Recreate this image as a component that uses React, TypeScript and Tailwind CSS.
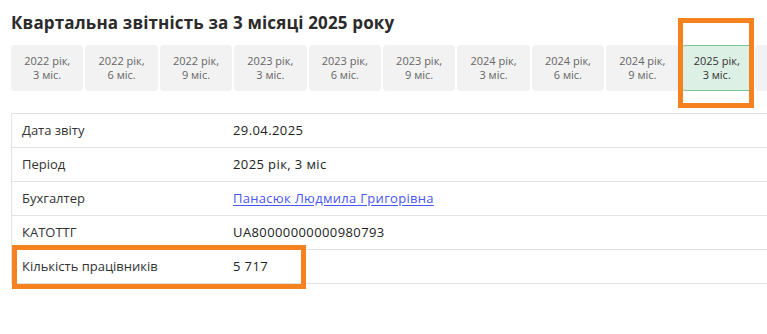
const TABS = [
  ['2022 рік,', '3 міс.'],
  ['2022 рік,', '6 міс.'],
  ['2022 рік,', '9 міс.'],
  ['2023 рік,', '3 міс.'],
  ['2023 рік,', '6 міс.'],
  ['2023 рік,', '9 міс.'],
  ['2024 рік,', '3 міс.'],
  ['2024 рік,', '6 міс.'],
  ['2024 рік,', '9 міс.'],
  ['2025 рік,', '3 міс.'],
]

const ROWS: { label: string; value: string; link?: boolean }[] = [
  { label: 'Дата звіту', value: '29.04.2025' },
  { label: 'Період', value: '2025 рік, 3 міс' },
  { label: 'Бухгалтер', value: 'Панасюк Людмила Григорівна', link: true },
  { label: 'КАТОТТГ', value: 'UA80000000000980793' },
  { label: 'Кількість працівників', value: '5 717' },
]

export default function App() {
  return (
    <div
      className="relative w-[767px] h-[334px] overflow-hidden bg-white pl-[11px] text-[#333]"
      style={{ fontFamily: '"Open Sans", "Noto Sans", sans-serif' }}
    >
      <h1 className="mt-[11px] text-[17px] leading-[24px] font-bold text-[#2b2b2b] tracking-[0.15px]">
        Квартальна звітність за 3 місяці 2025 року
      </h1>

      {/* period tabs, the next one is cut off by the window */}
      <div className="mt-[10px] flex gap-[2px] w-[900px]">
        {TABS.map(([y, m], i) => (
          <div
            key={i}
            className={`w-[72.4px] h-[46px] shrink-0 rounded-[4px] flex flex-col items-center justify-center text-[11px] leading-[14px] ${
              i === 9 ? 'bg-[#ddf0e5] border border-[#79c797] text-[#333]' : 'bg-[#f2f2f2] text-[#666]'
            }`}
          >
            <span>{y}</span>
            <span>{m}</span>
          </div>
        ))}
        <div className="w-[72.4px] h-[46px] shrink-0 rounded-[4px] bg-[#f2f2f2]" />
      </div>

      {/* report table */}
      <div className="mt-[22px] w-[800px] border-l border-t border-[#e3e3e3]">
        {ROWS.map(r => (
          <div key={r.label} className="flex h-[34px] items-center border-b border-[#e3e3e3] text-[13px]">
            <div className="w-[221px] pl-[10px] text-[#333]">{r.label}</div>
            {r.link ? (
              <a href="#" className="text-[#4a55f5] underline underline-offset-2 tracking-[0.3px]">{r.value}</a>
            ) : (
              <div className="text-[#222] tracking-[0.4px]">{r.value}</div>
            )}
          </div>
        ))}
      </div>

      {/* annotation boxes */}
      <div className="absolute left-[678px] top-[18px] w-[76px] h-[90px] border-[5px] border-[#f5821f]" />
      <div className="absolute left-[12px] top-[245px] w-[294px] h-[44px] border-[5px] border-[#f5821f]" />
    </div>
  )
}
